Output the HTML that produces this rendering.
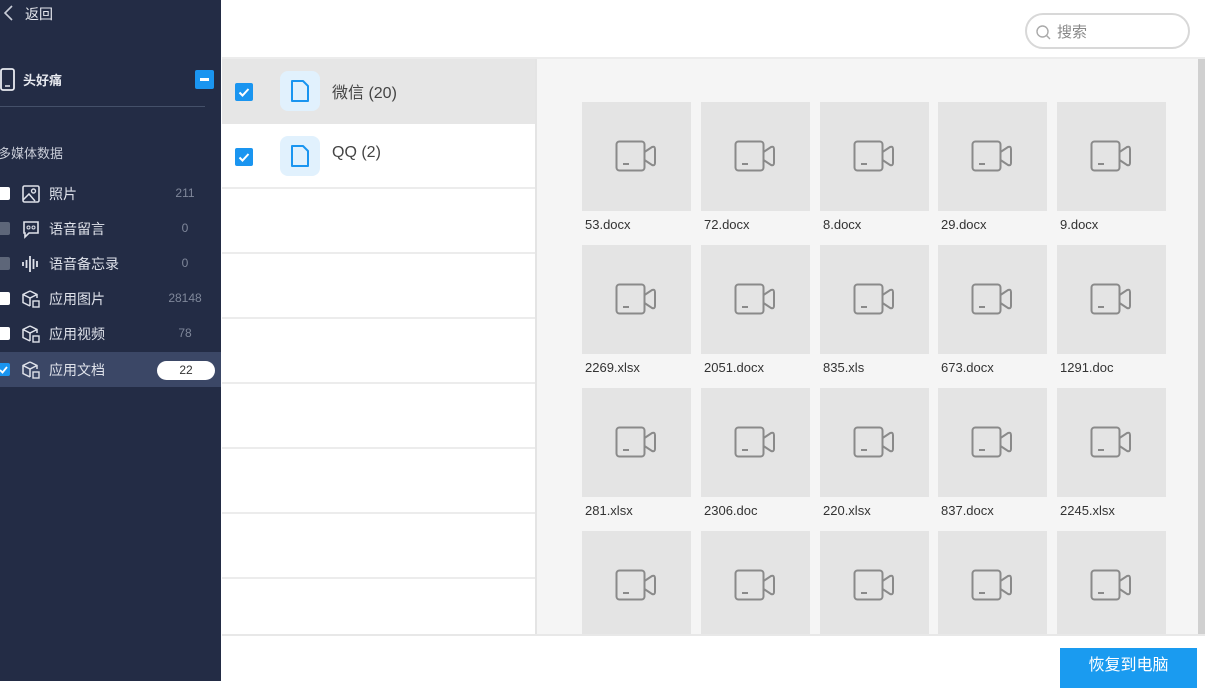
<!DOCTYPE html>
<html><head><meta charset="utf-8"><style>
*{margin:0;padding:0;box-sizing:border-box}
body{width:1205px;height:681px;position:relative;overflow:hidden;background:#fff;font-family:"Liberation Sans","Noto Sans CJK SC",sans-serif}
.a{position:absolute}
#side{left:0;top:0;width:221px;height:681px;background:#232c45;color:#e6e8ee}
.it{position:absolute;left:0;width:221px;height:35px;font-size:14px}
.it .cb{position:absolute;left:-3px;top:11px;width:13px;height:13px;background:#fff;border-radius:2px}
.it .cb.g{background:#5d6679}
.it .ic{position:absolute;left:21px;top:8px;width:20px;height:20px}
.it .t{position:absolute;left:49px;top:8px;color:#dfe2ea}
.it .n{position:absolute;left:155px;width:60px;text-align:center;top:10px;font-size:12px;color:#7f879a}
.row{position:absolute;left:222px;width:313px;height:65px;border-bottom:2px solid #ececec}
.chk{position:absolute;left:13px;top:24px;width:18px;height:18px;background:#1a95f0;border-radius:2px}
.fold{position:absolute;left:58px;top:12px;width:40px;height:40px;background:#e1f1fd;border-radius:8px}
.rt{position:absolute;left:110px;top:20px;font-size:16px;color:#444}
.tile{position:absolute;width:109px;height:109px;background:#e4e4e4}
.tile svg{position:absolute;left:33px;top:38px}
.lb{position:absolute;font-size:13px;color:#333}
</style></head><body>
<div id="side" class="a">
 <svg class="a" style="left:2px;top:4px" width="12" height="18"><path d="M10 2 L3 9 L10 16" stroke="#c9cdd8" stroke-width="1.6" fill="none"/></svg>
 <div class="a" style="left:25px;top:4px;font-size:14px">返回</div>
 <svg class="a" style="left:0;top:68px" width="16" height="24"><rect x="1" y="1" width="13" height="21" rx="2" stroke="#e8eaf0" stroke-width="1.8" fill="none"/><line x1="5" y1="18" x2="10" y2="18" stroke="#e8eaf0" stroke-width="1.5"/></svg>
 <div class="a" style="left:23px;top:70px;font-size:13px;font-weight:bold">头好痛</div>
 <div class="a" style="left:195px;top:70px;width:19px;height:19px;background:#1a95f0;border-radius:2px"><div class="a" style="left:5px;top:8px;width:9px;height:3px;background:#fff"></div></div>
 <div class="a" style="left:0;top:106px;width:205px;height:1px;background:#445069"></div>
 <div class="a" style="left:-2px;top:143px;font-size:13px;color:#c9cdd8">多媒体数据</div>
 <div class="it" style="top:176px"><div class="cb"></div><svg class="ic" viewBox="0 0 20 20"><rect x="2" y="2" width="16" height="16" rx="1.5" stroke="#dfe2ea" stroke-width="1.6" fill="none"/><circle cx="12.5" cy="7" r="2" stroke="#dfe2ea" stroke-width="1.4" fill="none"/><path d="M2 16 L8 10 L14 17" stroke="#dfe2ea" stroke-width="1.5" fill="none"/></svg><span class="t">照片</span><span class="n">211</span></div>
 <div class="it" style="top:211px"><div class="cb g"></div><svg class="ic" viewBox="0 0 20 20"><path d="M3 3 H17 V14 H8 L4 18 V14 H3 Z" stroke="#dfe2ea" stroke-width="1.6" fill="none"/><circle cx="7.5" cy="8.5" r="1.5" stroke="#dfe2ea" fill="none"/><circle cx="12.5" cy="8.5" r="1.5" stroke="#dfe2ea" fill="none"/></svg><span class="t">语音留言</span><span class="n">0</span></div>
 <div class="it" style="top:246px"><div class="cb g"></div><svg class="ic" viewBox="0 0 20 20"><path d="M2 8v4M5.5 6v8M9 2v16M12.5 5v10M16 7v6" stroke="#dfe2ea" stroke-width="1.8"/></svg><span class="t">语音备忘录</span><span class="n">0</span></div>
 <div class="it" style="top:281px"><div class="cb"></div><svg class="ic" viewBox="0 0 20 20"><path d="M9 2 L16 5.5 V9 M9 2 L2 5.5 V13.5 L9 17 M2 5.5 L9 9 L16 5.5 M9 9 V17" stroke="#dfe2ea" stroke-width="1.5" fill="none"/><rect x="12" y="12" width="6" height="6" stroke="#dfe2ea" stroke-width="1.4" fill="none"/></svg><span class="t">应用图片</span><span class="n">28148</span></div>
 <div class="it" style="top:316px"><div class="cb"></div><svg class="ic" viewBox="0 0 20 20"><path d="M9 2 L16 5.5 V9 M9 2 L2 5.5 V13.5 L9 17 M2 5.5 L9 9 L16 5.5 M9 9 V17" stroke="#dfe2ea" stroke-width="1.5" fill="none"/><rect x="12" y="12" width="6" height="6" stroke="#dfe2ea" stroke-width="1.4" fill="none"/></svg><span class="t">应用视频</span><span class="n">78</span></div>
 <div class="it" style="top:352px;background:#3b4766"><div class="cb" style="background:#1a95f0"><svg width="13" height="13" style="position:absolute;left:0;top:0"><path d="M3 7 L5.5 9.5 L10 4" stroke="#fff" stroke-width="1.8" fill="none"/></svg></div><svg class="ic" viewBox="0 0 20 20"><path d="M9 2 L16 5.5 V9 M9 2 L2 5.5 V13.5 L9 17 M2 5.5 L9 9 L16 5.5 M9 9 V17" stroke="#dfe2ea" stroke-width="1.5" fill="none"/><rect x="12" y="12" width="6" height="6" stroke="#dfe2ea" stroke-width="1.4" fill="none"/></svg><span class="t">应用文档</span><div class="a" style="left:157px;top:9px;width:58px;height:19px;background:#fff;border-radius:10px;color:#333;font-size:12px;text-align:center;line-height:19px">22</div></div>
</div>
<div class="a" style="left:1025px;top:13px;width:165px;height:36px;border:2px solid #d8d8d8;border-radius:18px"></div>
<svg class="a" style="left:1035px;top:24px" width="18" height="18"><circle cx="7.5" cy="7.5" r="5.5" stroke="#aaa" stroke-width="1.4" fill="none"/><path d="M11.5 11.5 L15 15" stroke="#aaa" stroke-width="1.4"/></svg>
<div class="a" style="left:1057px;top:21px;font-size:15px;color:#888">搜索</div>
<div class="a" style="left:222px;top:57px;width:983px;height:2px;background:#ececec"></div>
<div class="a" style="left:537px;top:59px;width:668px;height:576px;background:#f5f5f5"></div>
<div class="a" style="left:535px;top:59px;width:2px;height:576px;background:#e4e4e4"></div>
<div class="a" style="left:1198px;top:59px;width:7px;height:575px;background:#d0d0d0"></div>
<div class="a" style="left:222px;top:634px;width:983px;height:2px;background:#e8e8e8"></div>
<div class="row" style="top:59px;background:#e6e6e6;border-bottom:none"><div class="chk"><svg width="18" height="18"><path d="M4.5 9.5 L7.5 12.5 L13.5 6" stroke="#fff" stroke-width="2" fill="none"/></svg></div><div class="fold"><svg width="40" height="40"><path d="M12 10 H23 L28 15 V30 H12 Z" stroke="#1a95f0" stroke-width="2" fill="none" stroke-linejoin="round"/></svg></div><div class="rt">微信 (20)</div></div>
<div class="row" style="top:124px"><div class="chk"><svg width="18" height="18"><path d="M4.5 9.5 L7.5 12.5 L13.5 6" stroke="#fff" stroke-width="2" fill="none"/></svg></div><div class="fold"><svg width="40" height="40"><path d="M12 10 H23 L28 15 V30 H12 Z" stroke="#1a95f0" stroke-width="2" fill="none" stroke-linejoin="round"/></svg></div><div class="rt">QQ (2)</div></div>
<div class="row" style="top:189px"></div><div class="row" style="top:254px"></div><div class="row" style="top:319px"></div><div class="row" style="top:384px"></div><div class="row" style="top:449px"></div><div class="row" style="top:514px"></div>
<div id="grid"></div>
<div class="a" style="left:1060px;top:648px;width:137px;height:40px;background:#1a9bf0;color:#fff;font-size:16px;text-align:center;line-height:36px">恢复到电脑</div>
<script>
var xs=[582,701,820,938,1057],ys=[102,245,388,531],n=[["53.docx","72.docx","8.docx","29.docx","9.docx"],["2269.xlsx","2051.docx","835.xls","673.docx","1291.doc"],["281.xlsx","2306.doc","220.xlsx","837.docx","2245.xlsx"]];
var h="";
var ic='<svg width="44" height="34" viewBox="0 0 44 34"><rect x="1.5" y="1.5" width="28" height="29" rx="3" stroke="#8a8a8a" stroke-width="2" fill="none"/><path d="M29.5 12 L37 7 Q40 6 40 9 V23 Q40 26 37 25 L29.5 20" stroke="#8a8a8a" stroke-width="2" fill="none"/><line x1="8" y1="24" x2="14" y2="24" stroke="#8a8a8a" stroke-width="2"/></svg>';
for(var r=0;r<4;r++)for(var c=0;c<5;c++){var hh=r==3?103:109;h+='<div class="tile" style="left:'+xs[c]+'px;top:'+ys[r]+'px;height:'+hh+'px">'+ic+'</div>';if(r<3)h+='<div class="lb" style="left:'+(xs[c]+3)+'px;top:'+(ys[r]+115)+'px">'+n[r][c]+'</div>';}
document.getElementById("grid").innerHTML=h;
</script>
</body></html>
